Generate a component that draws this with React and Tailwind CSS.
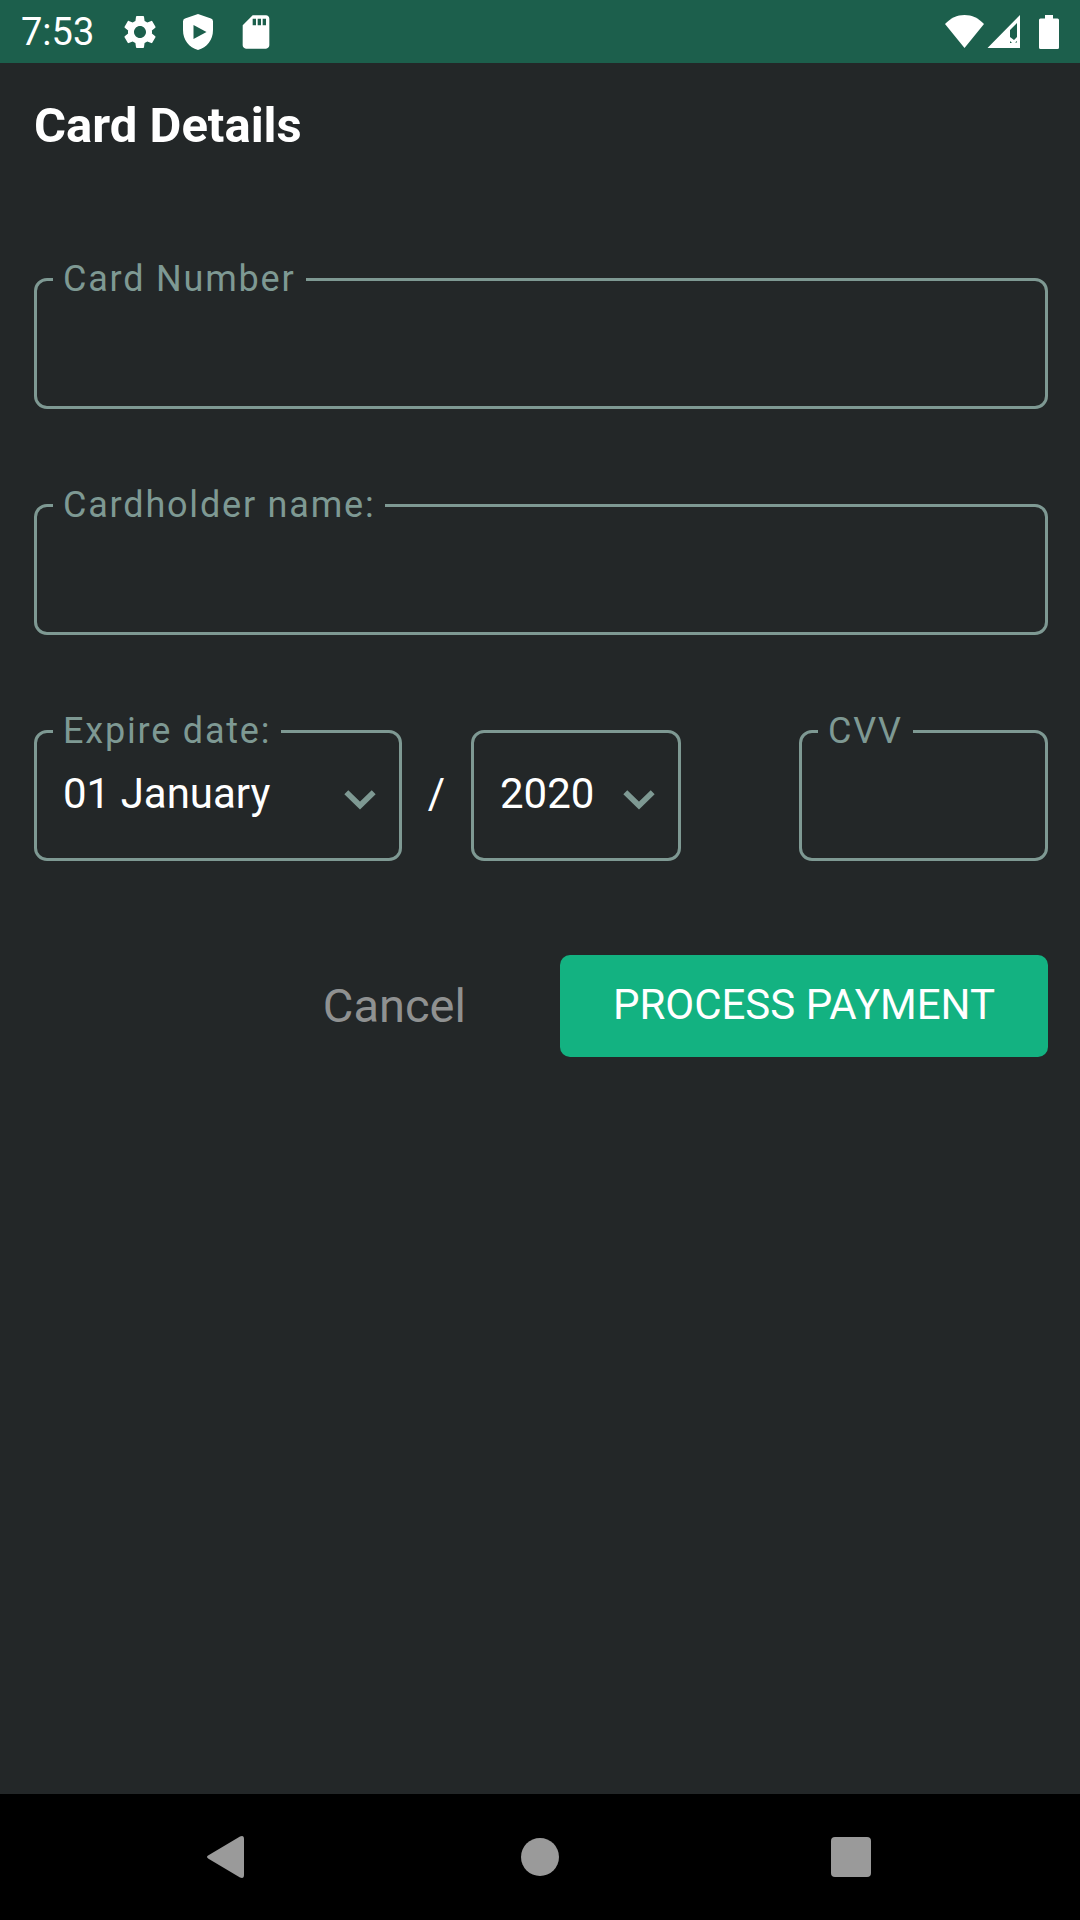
import { useState } from 'react'
import { MdSettings, MdSdCard } from 'react-icons/md'

const MONTHS = [
  '01 January',
  '02 February',
  '03 March',
  '04 April',
  '05 May',
  '06 June',
  '07 July',
  '08 August',
  '09 September',
  '10 October',
  '11 November',
  '12 December',
]

const YEARS = ['2020', '2021', '2022', '2023', '2024', '2025']

function ShieldPlay() {
  return (
    <svg width="40" height="40" viewBox="0 0 40 40" fill="currentColor" aria-hidden="true">
      <path
        fillRule="evenodd"
        d="M20 2L33 6.6Q35 7.3 35 9.5V18C35 28 29 35.5 20 38C11 35.5 5 28 5 18V9.5Q5 7.3 7 6.6ZM15.5 13V27L28.5 20Z"
      />
    </svg>
  )
}

function Wifi() {
  return (
    <svg width="40" height="34" viewBox="0 0 40 34" fill="currentColor" aria-hidden="true">
      <path d="M19.5 33L0 9C5.500 3.200 12 0 19.500 0S33.500 3.200 39 9Z" />
    </svg>
  )
}

function Signal() {
  return (
    <svg width="34" height="34" viewBox="0 0 34 34" fill="currentColor" aria-hidden="true">
      <path
        fillRule="evenodd"
        d="M33 0V33H0.500ZM30 8L23 15V22L27 25L30 22ZM23 26V28H25ZM28 27.500H30V26Z"
      />
    </svg>
  )
}

function Battery() {
  return (
    <svg width="20" height="34" viewBox="0 0 20 34" fill="currentColor" aria-hidden="true">
      <path d="M6 0H14V3.500H18.500Q20 3.500 20 5V32.500Q20 34 18.500 34H1.500Q0 34 0 32.500V5Q0 3.500 1.500 3.500H6Z" />
    </svg>
  )
}

function StatusBar() {
  return (
    <header className="flex h-[63px] items-center justify-between bg-[#1c5f4c] px-[21px] text-white">
      <div className="flex items-center gap-[18px]">
        <span className="mr-2 text-[38px] leading-[40px]">7:53</span>
        <MdSettings size={40} />
        <ShieldPlay />
        <MdSdCard size={40} />
      </div>
      <div className="flex items-center">
        <Wifi />
        <span className="ml-[2px] mr-[18px]">
          <Signal />
        </span>
        <Battery />
      </div>
    </header>
  )
}

function Field({ id, label, children }) {
  return (
    <fieldset className="min-w-0 rounded-[13px] border-[3px] border-[#7e9993]">
      <legend className="ml-[16px] px-[10px] text-[36px] leading-[43px] tracking-wider text-[#7e9993]">
        <label htmlFor={id}>{label}</label>
      </legend>
      {children}
    </fieldset>
  )
}

function TextInput({ id, value, onChange, ...rest }) {
  return (
    <input
      id={id}
      value={value}
      onChange={(e) => onChange(e.target.value)}
      className="block h-[105px] w-full bg-transparent px-[26px] pb-[24px] text-[42px] text-white outline-none"
      {...rest}
    />
  )
}

function Chevron() {
  return (
    <svg
      width="32"
      height="20"
      viewBox="0 0 32 20"
      fill="none"
      className="pointer-events-none col-start-1 row-start-1 mr-[23px] mt-[12px] self-center justify-self-end text-[#7e9993]"
      aria-hidden="true"
    >
      <path d="M2.300 2.200L16 15.600L29.700 2.200" stroke="currentColor" strokeWidth="5.600" />
    </svg>
  )
}

const selectStyles =
  'col-start-1 row-start-1 w-full appearance-none bg-transparent pl-[26px] text-[42px] leading-[50px] text-white outline-none'

export default function App() {
  const [number, setNumber] = useState('')
  const [name, setName] = useState('')
  const [month, setMonth] = useState(MONTHS[0])
  const [year, setYear] = useState(YEARS[0])
  const [cvv, setCvv] = useState('')

  return (
    <div className="flex min-h-screen flex-col bg-[#232728] font-['Roboto',sans-serif]">
      <StatusBar />

      <main className="flex-1 pl-[34px] pr-[32px] pt-[35px]">
        <h1 className="text-[49px] font-bold leading-[56px] text-white">Card Details</h1>

        <form className="mt-[104px] flex flex-col gap-[75px]" onSubmit={(e) => e.preventDefault()}>
          <Field id="card-number" label="Card Number">
            <TextInput id="card-number" value={number} onChange={setNumber} inputMode="numeric" />
          </Field>

          <Field id="card-name" label="Cardholder name:">
            <TextInput id="card-name" value={name} onChange={setName} />
          </Field>

          {/* Expiry + CVV */}
          <div className="grid grid-cols-[368fr_69px_210fr_118px_249fr] items-end">
            <Field id="month" label="Expire date:">
              <div className="grid h-[105px] pb-[24px]">
                <select
                  id="month"
                  value={month}
                  onChange={(e) => setMonth(e.target.value)}
                  className={selectStyles}
                >
                  {MONTHS.map((m) => (
                    <option key={m}>{m}</option>
                  ))}
                </select>
                <Chevron />
              </div>
            </Field>

            <span className="pb-[42px] text-center text-[42px] leading-[50px] text-white">/</span>

            <div className="grid h-[131px] rounded-[13px] border-[3px] border-[#7e9993] pb-[4px]">
              <select
                aria-label="Expire year"
                value={year}
                onChange={(e) => setYear(e.target.value)}
                className={selectStyles}
              >
                {YEARS.map((y) => (
                  <option key={y}>{y}</option>
                ))}
              </select>
              <Chevron />
            </div>

            <div className="col-start-5">
              <Field id="cvv" label="CVV">
                <TextInput id="cvv" value={cvv} onChange={setCvv} inputMode="numeric" />
              </Field>
            </div>
          </div>

          {/* Actions */}
          <div className="mt-[19px] flex items-center justify-end gap-[94px]">
            <button type="button" className="text-[47px] leading-[56px] text-[#8f9191]">
              Cancel
            </button>
            <button
              type="submit"
              className="h-[102px] rounded-[10px] bg-[#13b281] px-[53px] pb-[2px] text-[42px] leading-[50px] text-white"
            >
              PROCESS PAYMENT
            </button>
          </div>
        </form>
      </main>

      <nav className="grid h-[126px] grid-cols-3 bg-black px-[74px] text-[#9a9a9a]">
        <button type="button" aria-label="Back" className="flex items-center justify-center">
          <svg width="44" height="44" viewBox="0 0 44 44" fill="currentColor">
            <path d="M1.500 20.300L33 1.500Q37 -0.200 37 4V40Q37 44.200 33 42.500L1.500 23.700Q-1.500 22 1.500 20.300Z" />
          </svg>
        </button>
        <button type="button" aria-label="Home" className="flex items-center justify-center">
          <span className="size-[38px] rounded-full bg-[#9a9a9a]" />
        </button>
        <button type="button" aria-label="Recents" className="flex items-center justify-center">
          <span className="size-[40px] rounded-[4px] bg-[#9a9a9a]" />
        </button>
      </nav>
    </div>
  )
}
